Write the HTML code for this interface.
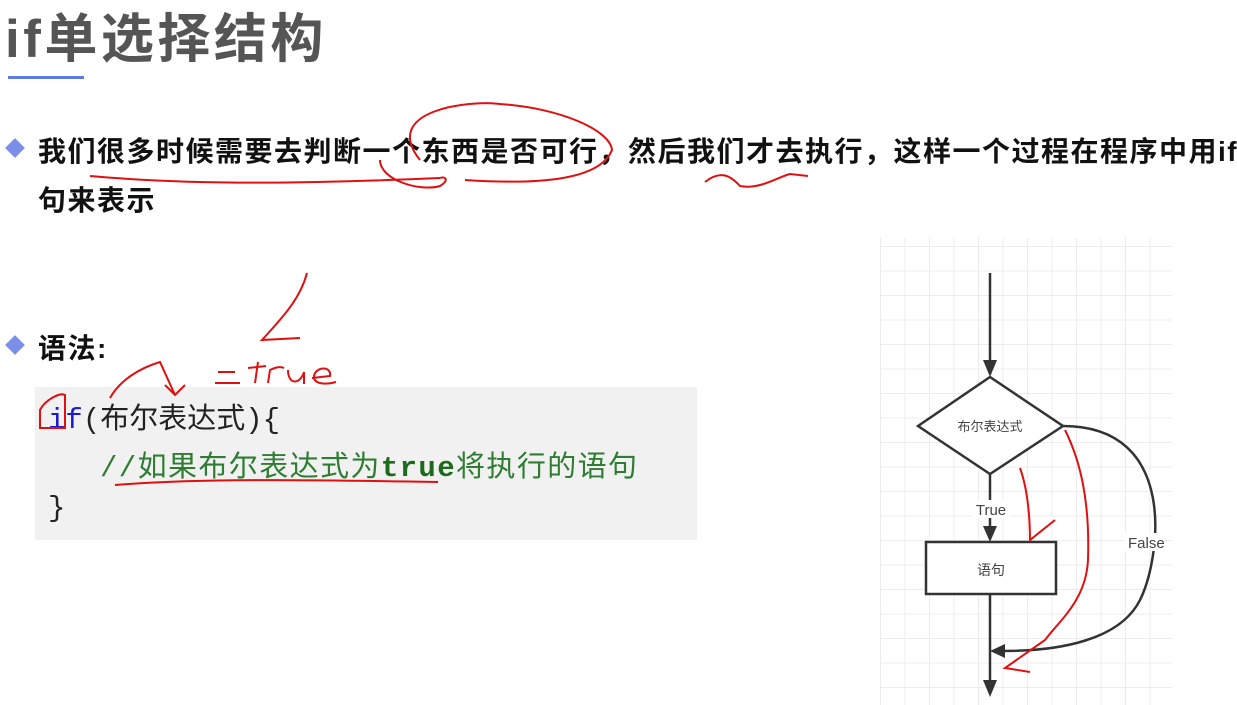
<!DOCTYPE html>
<html><head><meta charset="utf-8"><style>
body{margin:0;width:1237px;height:705px;background:#fff;position:relative;overflow:hidden;font-family:"Liberation Sans","Noto Sans CJK SC",sans-serif}
.a{position:absolute;white-space:nowrap}
.t{left:5px;top:-3px;font-size:53px;font-weight:bold;color:#555;letter-spacing:3.5px}
.ul{left:8px;top:76px;width:76px;height:3px;background:#5b7be0}
.b{font-size:28px;font-weight:bold;color:#111;letter-spacing:1.5px}
.dm{width:14px;height:14px;background:#7b8ee8;transform:rotate(45deg)}
.code{left:35px;top:387px;width:662px;height:153px;background:#f1f1f1}
.c{font-family:"Liberation Mono","Noto Sans CJK SC",monospace;font-size:29px;color:#222}
.grid{left:880px;top:238px;width:292px;height:467px;background-color:#fff;background-image:linear-gradient(#ececec 1px,transparent 1px),linear-gradient(90deg,#ececec 1px,transparent 1px);background-size:24.5px 24.5px;background-position:0 8px}
</style></head><body>
<div class="a t">if单选择结构</div>
<div class="a ul"></div>
<div class="a dm" style="left:8px;top:141px"></div>
<div class="a b" style="left:38px;top:130px">我们很多时候需要去判断一个东西是否可行，然后我们才去执行，这样一个过程在程序中用if语</div>
<div class="a b" style="left:38px;top:179px">句来表示</div>
<div class="a dm" style="left:8px;top:338px"></div>
<div class="a b" style="left:38px;top:327px">语法:</div>
<div class="a code"></div>
<div class="a c" style="left:48px;top:395px"><span style="color:#1a1ad0">if</span>(布尔表达式){</div>
<div class="a c" style="left:100px;top:443px;color:#2e7d32;letter-spacing:1.4px">//如果布尔表达式为<span style="color:#1b6b1b;font-weight:bold">true</span>将执行的语句</div>
<div class="a c" style="left:48px;top:492px">}</div>
<div class="a grid"></div>
<svg class="a" style="left:0;top:0" width="1237" height="705">
<g stroke="#333" stroke-width="2.5" fill="none">
<line x1="990" y1="273" x2="990" y2="362"/>
<polygon points="918,426 990,377 1063,426 990,474" fill="#fff"/>
<line x1="990" y1="474" x2="990" y2="528"/>
<rect x="926" y="542" width="130" height="52" fill="#fff"/>
<line x1="990" y1="594" x2="990" y2="683"/>
<path d="M1063,426 C1180,426 1160,560 1140,600 C1120,640 1060,651 1003,651"/>
</g>
<g fill="#333">
<polygon points="983,360 997,360 990,377"/>
<polygon points="983,526 997,526 990,542"/>
<polygon points="983,680 997,680 990,697"/>
<polygon points="1005,644 1005,658 990,651"/>
</g>
<rect x="972" y="500" width="38" height="18" fill="#fff"/>
<rect x="1124" y="533" width="40" height="18" fill="#fff"/>
<text x="990" y="431" font-size="13" fill="#444" text-anchor="middle" font-family="Liberation Sans,Noto Sans CJK SC,sans-serif">布尔表达式</text>
<text x="991" y="515" font-size="15" fill="#444" text-anchor="middle" font-family="Liberation Sans,sans-serif">True</text>
<text x="1128" y="548" font-size="15" fill="#444" font-family="Liberation Sans,sans-serif">False</text>
<text x="991" y="575" font-size="14" fill="#444" text-anchor="middle" font-family="Liberation Sans,Noto Sans CJK SC,sans-serif">语句</text>
<g stroke="#e01010" stroke-width="2" fill="none">
<path d="M90,176 C200,186 320,183 440,178"/>
<path d="M420,160 C380,110 470,100 500,104 C560,108 610,130 612,150 C600,180 540,185 465,180"/>
<path d="M380,160 C380,180 420,192 440,186 C450,180 445,176 440,178"/>
<path d="M705,182 C720,170 730,175 740,186 C760,190 780,176 790,174 L808,176"/>
<path d="M115,485 C200,478 320,480 438,482"/>
<path d="M40,428 L40,410 C45,400 60,392 65,395 L65,428 Z"/>
<path d="M110,398 C120,380 140,368 160,362 L175,395"/>
<path d="M165,385 L175,395 L185,385"/>
<path d="M215,383 L240,383 M218,372 L235,372"/>
<path d="M258,362 L255,383 M248,368 L266,366"/>
<path d="M268,383 L270,370 C274,368 280,366 284,368"/>
<path d="M288,370 C288,385 300,385 304,372 L304,384"/>
<path d="M312,378 L330,376 C332,366 316,366 314,376 C313,384 325,385 336,382"/>
<path d="M307,273 C300,300 280,320 262,340 L300,338"/>
<path d="M1065,430 C1080,460 1090,500 1088,560 C1086,600 1060,620 1045,640 L1005,668 L1030,672"/>
<path d="M1020,468 C1028,490 1030,520 1030,540 L1055,520"/>
</g>
</svg>
</body></html>
